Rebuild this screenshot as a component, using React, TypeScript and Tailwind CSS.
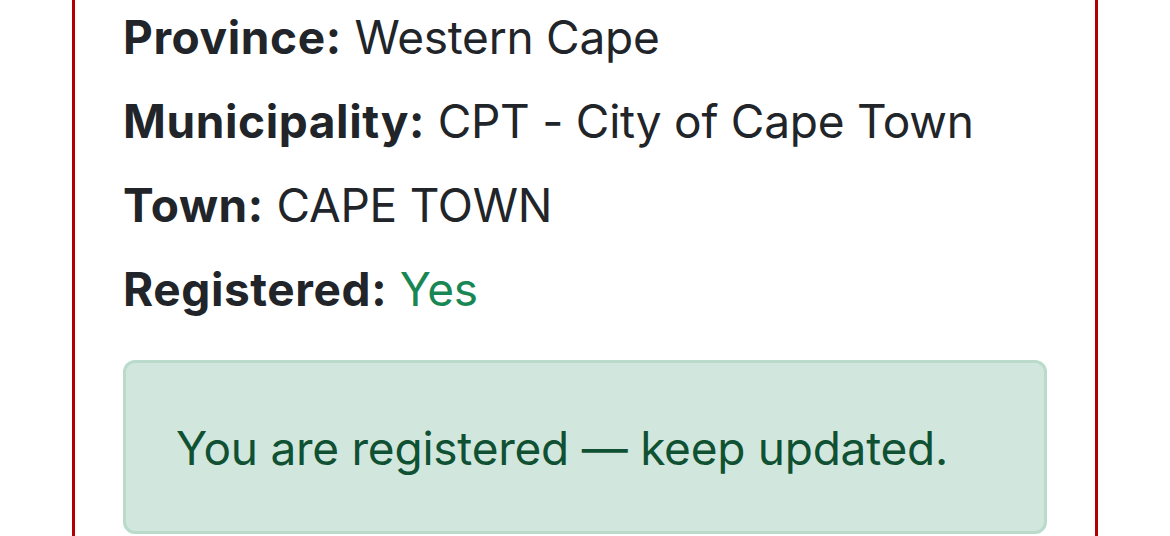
export default function App() {
  const rows: { label: string; value: string; green?: boolean }[] = [
    { label: "Province:", value: "Western Cape" },
    { label: "Municipality:", value: "CPT - City of Cape Town" },
    { label: "Town:", value: "CAPE TOWN" },
    { label: "Registered:", value: "Yes", green: true },
  ];
  return (
    <div className="w-[1170px] h-[536px] bg-white overflow-hidden" style={{ fontFamily: "Inter, 'Noto Sans', sans-serif" }}>
      <div className="ml-[72px] w-[1026px] h-[600px] border-x-[3px] border-[#b20000] px-[48px] pt-[9px]">
        <div className="flex flex-col gap-[28px]">
          {rows.map((r) => (
            <div key={r.label} className="text-[46px] leading-[56px] text-[#212529] whitespace-nowrap tracking-[-0.25px]">
              <span className="font-bold tracking-[0.6px]">{r.label}</span>{" "}
              <span className={r.green ? "text-[#198754]" : ""}>{r.value}</span>
            </div>
          ))}
        </div>
        <div className="mt-[43px] h-[174px] rounded-[12px] border-[3px] border-[#badbcc] bg-[#d1e7dd] pl-[50px] pt-[57px]">
          <div className="text-[46px] leading-[56px] text-[#0f5132] whitespace-nowrap tracking-[-0.25px]">You are registered — keep updated.</div>
        </div>
      </div>
    </div>
  );
}
